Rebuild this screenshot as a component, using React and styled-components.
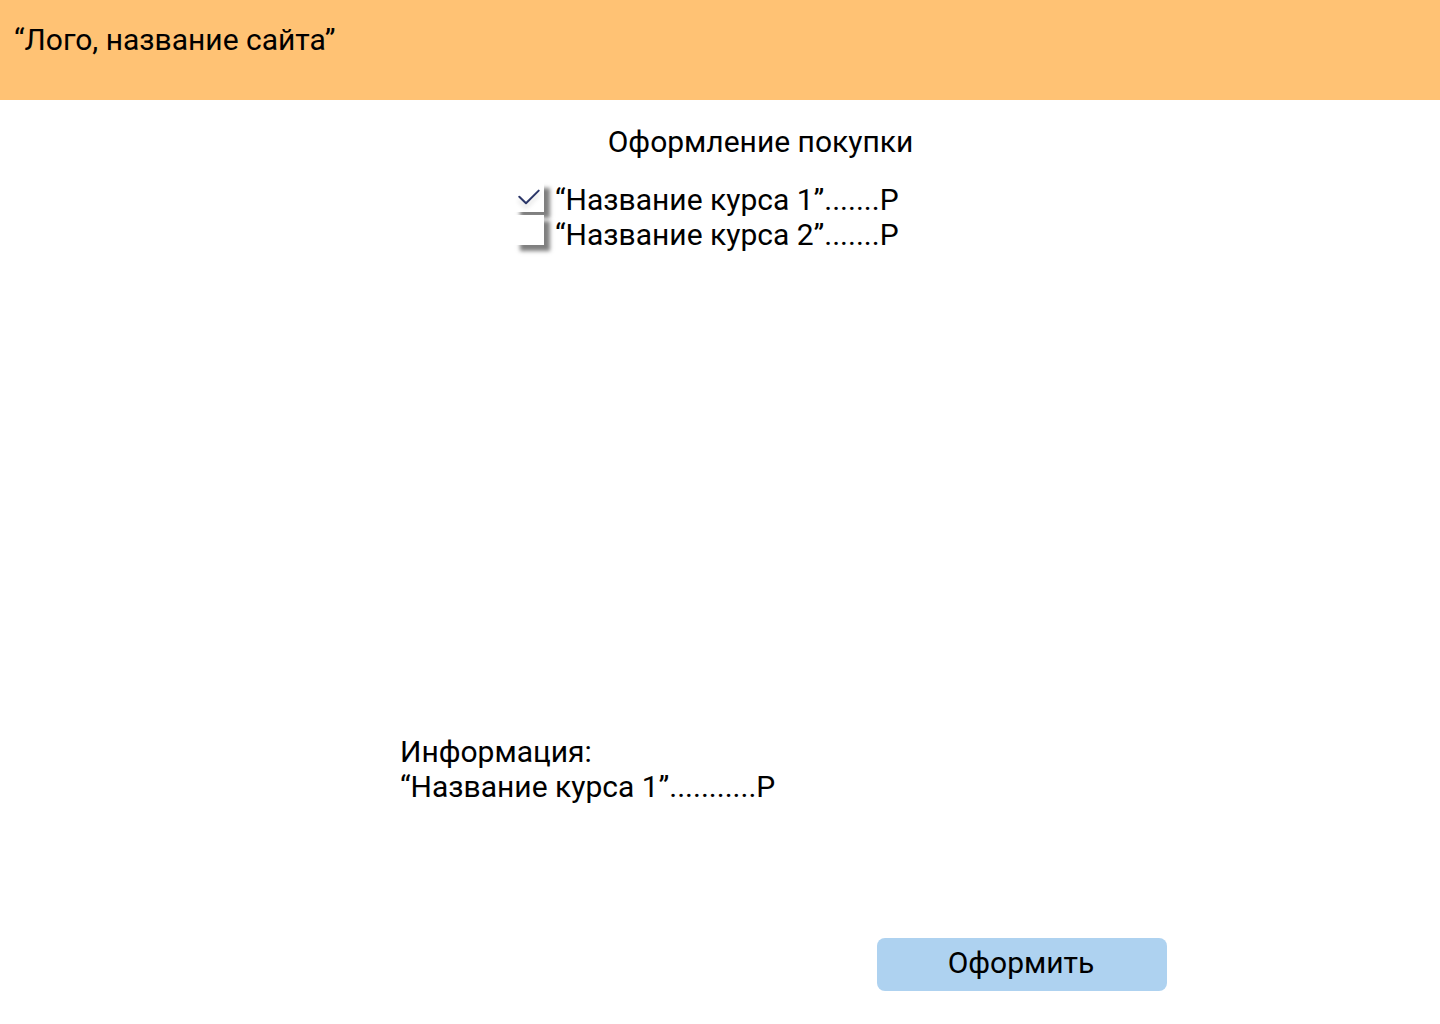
import React, { useState } from "react";
import styled, { createGlobalStyle } from "styled-components";

const GlobalStyle = createGlobalStyle`
  *, *::before, *::after { box-sizing: border-box; }
  body {
    margin: 0;
    background: #ffffff;
    color: #000000;
    font-family: Roboto, "Noto Sans", sans-serif;
    font-size: 30px;
    line-height: 35px;
  }
`;

const Page = styled.div`
  min-height: 100vh;
  display: flex;
  flex-direction: column;
`;

const Header = styled.header`
  min-height: 100px;
  padding: 22px 14px;
  background: #ffc274;
`;

const Main = styled.main`
  flex: 1;
  display: flex;
  flex-direction: column;
  padding: 24px 0 33px;
`;

const Title = styled.h1`
  margin: 0;
  padding-left: 81px;
  font: inherit;
  text-align: center;
`;

const Content = styled.div`
  flex: 1;
  display: flex;
  flex-direction: column;
  justify-content: space-between;
  width: 100%;
  max-width: 640px;
  margin: 0 auto;
  padding: 23px 0 134px;
`;

const CoursePicker = styled.div`
  display: flex;
  gap: 11px;
  padding-left: 114px;
`;

const BoxColumn = styled.div`
  display: flex;
  flex-direction: column;
  gap: 3px;
`;

const LabelColumn = styled.div`
  display: flex;
  flex-direction: column;
`;

const BoxCell = styled.span`
  position: relative;
  display: flex;
`;

const CheckBox = styled.input`
  appearance: none;
  width: 30px;
  height: 30px;
  margin: 0;
  background: #ffffff;
  box-shadow: 6px 6px 4px rgba(0, 0, 0, 0.5);
  cursor: pointer;
`;

const CheckMark = styled.svg`
  position: absolute;
  top: 0;
  left: 0;
  pointer-events: none;
  filter: drop-shadow(0 4px 2px rgba(0, 0, 0, 0.15));
`;

const Info = styled.section`
  h2, p { margin: 0; font: inherit; }
`;

const Actions = styled.div`
  display: flex;
  justify-content: flex-end;
  padding-right: 273px;
`;

const SubmitButton = styled.button`
  width: 290px;
  height: 53px;
  padding: 0 2px 4px 0;
  border: 0;
  border-radius: 8px;
  background: #aed2f0;
  color: inherit;
  font: inherit;
  cursor: pointer;
`;

const courses = [
  { id: "course-1", name: "“Название курса 1”" },
  { id: "course-2", name: "“Название курса 2”" },
];

export default function App() {
  const [selected, setSelected] = useState({ "course-1": true });
  const toggle = (id) => setSelected((s) => ({ ...s, [id]: !s[id] }));

  return (
    <Page>
      <GlobalStyle />
      <Header>“Лого, название сайта”</Header>
      <Main>
        <Title>Оформление покупки</Title>
        <Content>
          <CoursePicker>
            <BoxColumn>
              {courses.map(({ id }) => (
                <BoxCell key={id}>
                  <CheckBox
                    type="checkbox"
                    id={id}
                    checked={!!selected[id]}
                    onChange={() => toggle(id)}
                  />
                  {selected[id] && (
                    <CheckMark width="30" height="30" viewBox="0 0 30 30" fill="none" aria-hidden="true">
                      <path
                        d="M5.3 14.7L12 21.3L24.7 8.6"
                        stroke="#2b3668"
                        strokeWidth="2"
                        strokeLinecap="round"
                        strokeLinejoin="round"
                      />
                    </CheckMark>
                  )}
                </BoxCell>
              ))}
            </BoxColumn>
            <LabelColumn>
              {courses.map(({ id, name }) => (
                <label key={id} htmlFor={id}>{name}.......Р</label>
              ))}
            </LabelColumn>
          </CoursePicker>
          <Info>
            <h2>Информация:</h2>
            {courses
              .filter(({ id }) => selected[id])
              .map(({ id, name }) => (
                <p key={id}>{name}...........Р</p>
              ))}
          </Info>
        </Content>
        <Actions>
          <SubmitButton type="button">Оформить</SubmitButton>
        </Actions>
      </Main>
    </Page>
  );
}
